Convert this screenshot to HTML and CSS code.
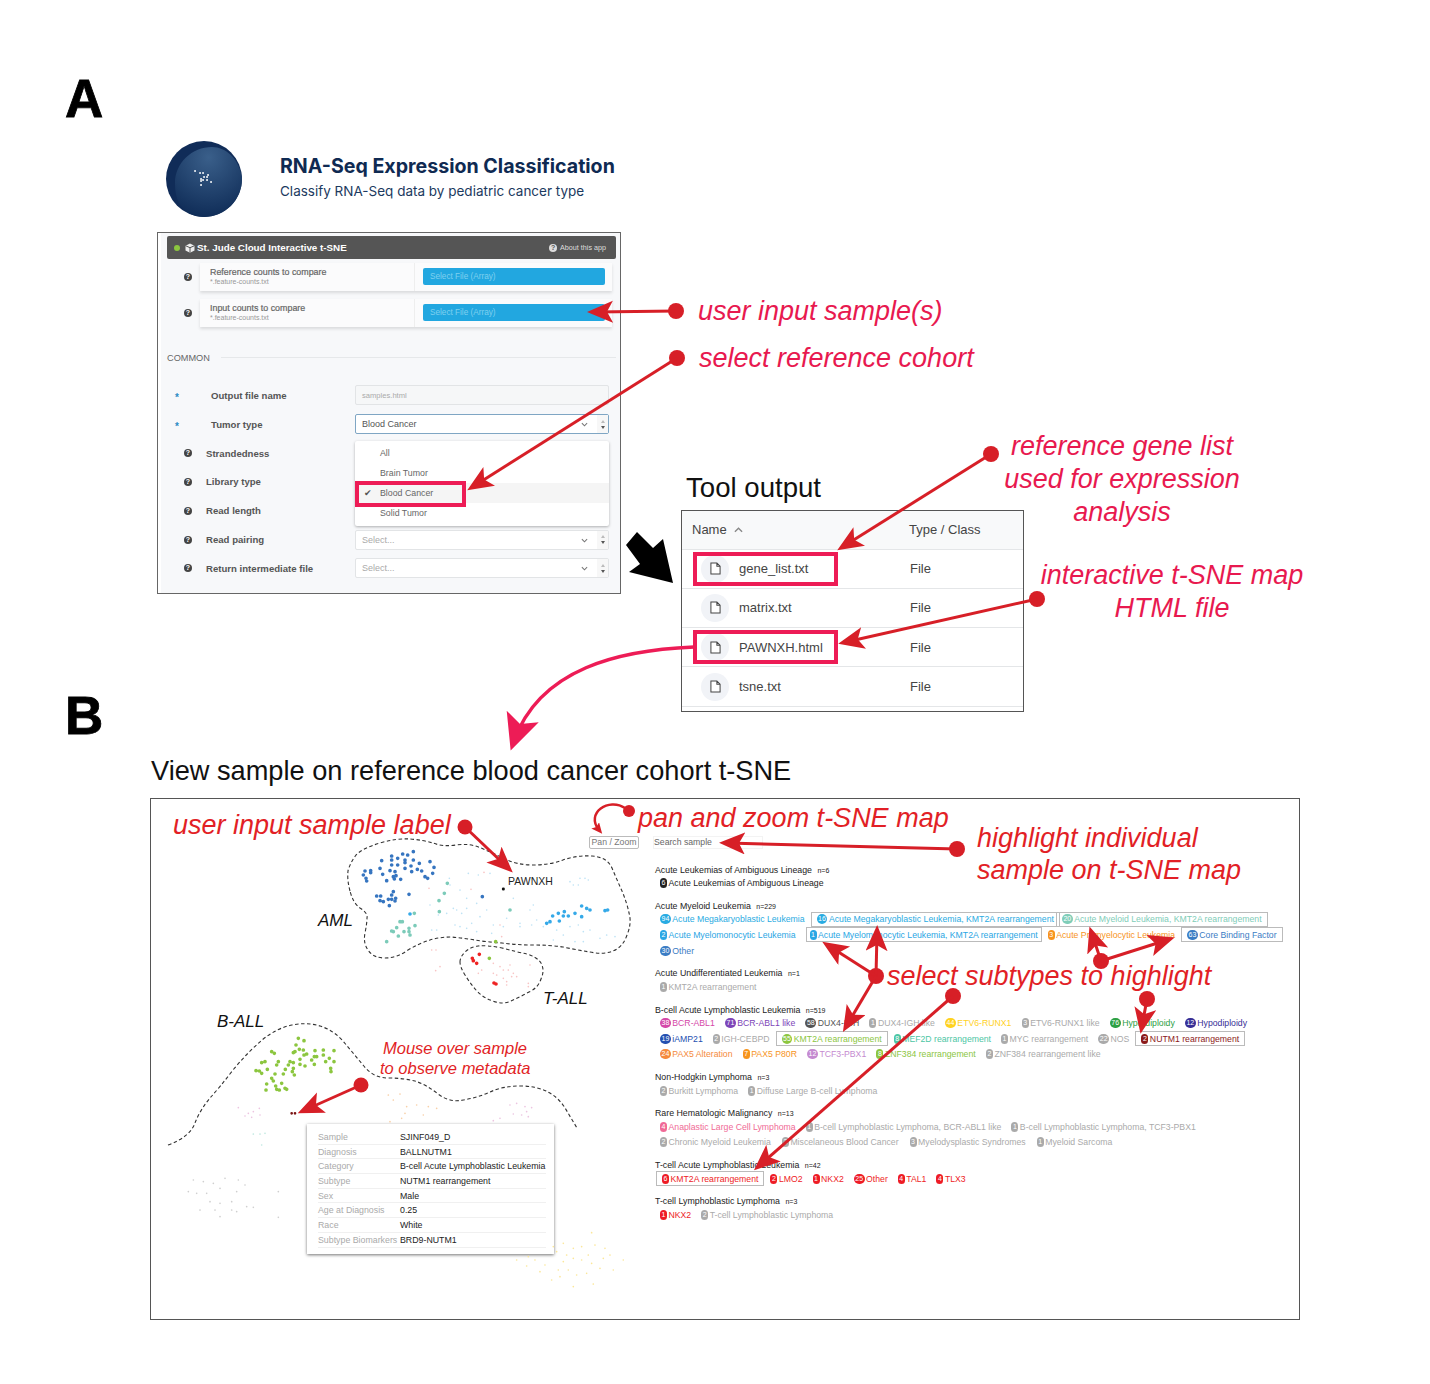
FILE: index.html
```html
<!DOCTYPE html>
<html lang="en">
<head>
<meta charset="utf-8">
<title>RNA-Seq Expression Classification figure</title>
<link rel="stylesheet" href="styles.css">
</head>
<body>
<main class="figure">
  <div class="panel-letter letter-a">A</div>
  <div class="panel-letter letter-b">B</div>

  <header class="app-title">
    <svg class="logo" viewBox="0 0 76 76" width="76" height="76">
      <defs>
        <radialGradient id="lens" cx="50%" cy="15%" r="90%"><stop offset="0" stop-color="#3a5f8a"/><stop offset="1" stop-color="#0d2a55"/></radialGradient>
      </defs>
      <circle cx="38" cy="38" r="38" fill="#102c58"/>
      <path d="M9 42C9 22 26 6 46 6c14 0 27 12 30 30 1 2 0 2 0 2 0 21-17 38-38 38-12 0-20-6-25-14-3-6-4-12-4-20z" fill="url(#lens)"/>
      <path class="logo-dots" d="M29 30h.1M34 32h.1M37 32h.1M42 34h.1M41 36h.1M35 38h.1M37 39h.1M35 40h.1M41 39h.1M45 41h.1M35 44h.1M38 36h.1"/>
    </svg>
    <div class="title-text">
      <h1>RNA-Seq Expression Classification</h1>
      <p>Classify RNA-Seq data by pediatric cancer type</p>
    </div>
  </header>

  <section class="app">
    <div class="app-bar">
      <span class="status"></span>
      <svg class="cube" viewBox="0 0 10 10" width="10" height="10"><path d="M5 .5 9.5 2.700v4.800L5 9.700.5 7.500V2.700z" fill="#eee"/><path d="M5 4.700v5M.5 2.700 5 4.700l4.500-2" stroke="#555" fill="none"/></svg>
      <strong>St. Jude Cloud Interactive t-SNE</strong>
      <span class="about"><i class="help light">?</i>About this app</span>
    </div>
    <div class="input-row">
      <i class="help">?</i>
      <div class="input-card">
        <div class="input-label"><b>Reference counts to compare</b><small>*.feature-counts.txt</small></div>
        <div class="input-action"><span class="file-btn">Select File (Array)</span></div>
      </div>
    </div>
    <div class="input-row">
      <i class="help">?</i>
      <div class="input-card">
        <div class="input-label"><b>Input counts to compare</b><small>*.feature-counts.txt</small></div>
        <div class="input-action"><span class="file-btn">Select File (Array)</span></div>
      </div>
    </div>
    <div class="common"><span>COMMON</span></div>
    <div class="form">
      <div class="form-row"><label class="req">Output file name</label><span class="field muted">samples.html</span></div>
      <div class="form-row tumor"><label class="req">Tumor type</label>
        <span class="field select focus">Blood Cancer<svg class="chev" viewBox="0 0 8 5" width="7" height="5"><path d="M1 1l3 3 3-3"/></svg><span class="spin"><em class="up"></em><em class="down"></em></span></span>
        <ul class="menu">
          <li>All</li>
          <li>Brain Tumor</li>
          <li class="active"><span class="tick">✔</span>Blood Cancer</li>
          <li>Solid Tumor</li>
        </ul>
      </div>
      <div class="form-row"><label><i class="help">?</i>Strandedness</label></div>
      <div class="form-row"><label><i class="help">?</i>Library type</label></div>
      <div class="form-row"><label><i class="help">?</i>Read length</label></div>
      <div class="form-row"><label><i class="help">?</i>Read pairing</label>
        <span class="field select muted">Select...<svg class="chev" viewBox="0 0 8 5" width="7" height="5"><path d="M1 1l3 3 3-3"/></svg><span class="spin"><em class="up"></em><em class="down"></em></span></span></div>
      <div class="form-row"><label><i class="help">?</i>Return intermediate file</label>
        <span class="field select muted">Select...<svg class="chev" viewBox="0 0 8 5" width="7" height="5"><path d="M1 1l3 3 3-3"/></svg><span class="spin"><em class="up"></em><em class="down"></em></span></span></div>
    </div>
  </section>

  <h2 class="tool-title">Tool output</h2>
  <section class="files">
    <div class="file-head"><span class="col-name">Name <svg class="caret" viewBox="0 0 10 6" width="9" height="6"><path d="M1 5l4-4 4 4"/></svg></span><span class="col-type">Type / Class</span></div>
    <div class="file-row"><span class="file-ico"><svg viewBox="0 0 12 14" width="11" height="13"><path d="M1 1h6.500L11 4.500V13H1zM7.500 1v3.500H11"/></svg></span><span class="col-file">gene_list.txt</span><span class="col-type">File</span></div>
    <div class="file-row"><span class="file-ico"><svg viewBox="0 0 12 14" width="11" height="13"><path d="M1 1h6.500L11 4.500V13H1zM7.500 1v3.500H11"/></svg></span><span class="col-file">matrix.txt</span><span class="col-type">File</span></div>
    <div class="file-row"><span class="file-ico"><svg viewBox="0 0 12 14" width="11" height="13"><path d="M1 1h6.500L11 4.500V13H1zM7.500 1v3.500H11"/></svg></span><span class="col-file">PAWNXH.html</span><span class="col-type">File</span></div>
    <div class="file-row"><span class="file-ico"><svg viewBox="0 0 12 14" width="11" height="13"><path d="M1 1h6.500L11 4.500V13H1zM7.500 1v3.500H11"/></svg></span><span class="col-file">tsne.txt</span><span class="col-type">File</span></div>
  </section>

  <h2 class="view-title">View sample on reference blood cancer cohort t-SNE</h2>
  <section class="tsne-box"></section>

  <div class="tsne-tools">
    <span class="pan">Pan / Zoom</span>
    <span class="search">Search sample</span>
  </div>

  <section class="legend">
    <div class="group">
      <h3>Acute Leukemias of Ambiguous Lineage <small>n=6</small></h3>
      <div class="chips"><span class="chip ink"><b>6</b>Acute Leukemias of Ambiguous Lineage</span></div>
    </div>
    <div class="group">
      <h3>Acute Myeloid Leukemia <small>n=229</small></h3>
      <div class="chips">
        <span class="chip sky"><b>94</b>Acute Megakaryoblastic Leukemia</span>
        <span class="chip sky boxed"><b>16</b>Acute Megakaryoblastic Leukemia, KMT2A rearrangement</span>
        <span class="chip teal boxed join"><b>20</b>Acute Myeloid Leukemia, KMT2A rearrangement</span>
      </div>
      <div class="chips">
        <span class="chip sky2"><b>2</b>Acute Myelomonocytic Leukemia</span>
        <span class="chip sky2 boxed wide"><b>1</b>Acute Myelomonocytic Leukemia, KMT2A rearrangement</span>
        <span class="chip orange"><b>3</b>Acute Promyelocytic Leukemia</span>
        <span class="chip steel boxed"><b>63</b>Core Binding Factor</span>
      </div>
      <div class="chips"><span class="chip steel"><b>30</b>Other</span></div>
    </div>
    <div class="group">
      <h3>Acute Undifferentiated Leukemia <small>n=1</small></h3>
      <div class="chips"><span class="chip grey"><b>1</b>KMT2A rearrangement</span></div>
    </div>
    <div class="group">
      <h3>B-cell Acute Lymphoblastic Leukemia <small>n=519</small></h3>
      <div class="chips roomy">
        <span class="chip magenta"><b>38</b>BCR-ABL1</span>
        <span class="chip purple"><b>71</b>BCR-ABL1 like</span>
        <span class="chip dark"><b>58</b>DUX4-IGH</span>
        <span class="chip grey"><b>1</b>DUX4-IGH like</span>
        <span class="chip yellow"><b>44</b>ETV6-RUNX1</span>
        <span class="chip grey"><b>3</b>ETV6-RUNX1 like</span>
        <span class="chip green"><b>76</b>Hyperdiploidy</span>
        <span class="chip indigo"><b>12</b>Hypodiploidy</span>
      </div>
      <div class="chips">
        <span class="chip royal"><b>19</b>iAMP21</span>
        <span class="chip grey"><b>2</b>IGH-CEBPD</span>
        <span class="chip lime boxed"><b>55</b>KMT2A rearrangement</span>
        <span class="chip mint"><b>8</b>MEF2D rearrangement</span>
        <span class="chip grey"><b>1</b>MYC rearrangement</span>
        <span class="chip grey"><b>22</b>NOS</span>
        <span class="chip maroon boxed"><b>2</b>NUTM1 rearrangement</span>
      </div>
      <div class="chips roomy">
        <span class="chip coral"><b>24</b>PAX5 Alteration</span>
        <span class="chip amber"><b>7</b>PAX5 P80R</span>
        <span class="chip orchid"><b>12</b>TCF3-PBX1</span>
        <span class="chip lime"><b>8</b>ZNF384 rearrangement</span>
        <span class="chip grey"><b>2</b>ZNF384 rearrangement like</span>
      </div>
    </div>
    <div class="group">
      <h3>Non-Hodgkin Lymphoma <small>n=3</small></h3>
      <div class="chips">
        <span class="chip grey"><b>2</b>Burkitt Lymphoma</span>
        <span class="chip grey"><b>1</b>Diffuse Large B-cell Lymphoma</span>
      </div>
    </div>
    <div class="group">
      <h3>Rare Hematologic Malignancy <small>n=13</small></h3>
      <div class="chips">
        <span class="chip pink"><b>4</b>Anaplastic Large Cell Lymphoma</span>
        <span class="chip grey"><b>1</b>B-cell Lymphoblastic Lymphoma, BCR-ABL1 like</span>
        <span class="chip grey"><b>1</b>B-cell Lymphoblastic Lymphoma, TCF3-PBX1</span>
      </div>
      <div class="chips loose">
        <span class="chip grey"><b>2</b>Chronic Myeloid Leukemia</span>
        <span class="chip grey"><b>2</b>Miscelaneous Blood Cancer</span>
        <span class="chip grey"><b>3</b>Myelodysplastic Syndromes</span>
        <span class="chip grey"><b>1</b>Myeloid Sarcoma</span>
      </div>
    </div>
    <div class="group">
      <h3>T-cell Acute Lymphoblastic Leukemia <small>n=42</small></h3>
      <div class="chips">
        <span class="chip red boxed"><b>6</b>KMT2A rearrangement</span>
        <span class="chip red"><b>2</b>LMO2</span>
        <span class="chip red"><b>1</b>NKX2</span>
        <span class="chip red"><b>25</b>Other</span>
        <span class="chip red"><b>4</b>TAL1</span>
        <span class="chip red"><b>4</b>TLX3</span>
      </div>
    </div>
    <div class="group">
      <h3>T-cell Lymphoblastic Lymphoma <small>n=3</small></h3>
      <div class="chips">
        <span class="chip red"><b>1</b>NKX2</span>
        <span class="chip grey"><b>2</b>T-cell Lymphoblastic Lymphoma</span>
      </div>
    </div>
  </section>

  <div class="tooltip">
    <dl>
      <div><dt>Sample</dt><dd>SJINF049_D</dd></div>
      <div><dt>Diagnosis</dt><dd>BALLNUTM1</dd></div>
      <div><dt>Category</dt><dd>B-cell Acute Lymphoblastic Leukemia</dd></div>
      <div><dt>Subtype</dt><dd>NUTM1 rearrangement</dd></div>
      <div><dt>Sex</dt><dd>Male</dd></div>
      <div><dt>Age at Diagnosis</dt><dd>0.25</dd></div>
      <div><dt>Race</dt><dd>White</dd></div>
      <div><dt>Subtype Biomarkers</dt><dd>BRD9-NUTM1</dd></div>
    </dl>
  </div>

  <svg class="overlay" viewBox="0 0 1430 1384" width="1430" height="1384">
    <defs>
      <marker id="head" markerUnits="userSpaceOnUse" markerWidth="28" markerHeight="24" refX="18" refY="11" orient="auto"><path d="M26 11 0 0 6 11 0 22z" fill="#d71f27"/></marker>
      <marker id="small" markerUnits="userSpaceOnUse" markerWidth="14" markerHeight="12" refX="6" refY="5" orient="auto"><path d="M11 5 0 0 2 5 0 10z" fill="#d71f27"/></marker>
      <marker id="pinkhead" markerUnits="userSpaceOnUse" markerWidth="38" markerHeight="36" refX="26" refY="17" orient="auto"><path d="M36 17 0 0 8 17 0 34z" fill="#ed1c56"/></marker>
    </defs>

    <!-- t-SNE clusters -->
    <path class="dash" d="M350 891Q347 880 348 871Q350 863 356 855Q363 848 380 843Q397 838 410 839Q423 840 433 843Q443 847 456 845Q470 843 481 848Q493 853 505 859Q517 865 533 865Q550 865 563 860Q577 855 592 856Q607 857 612 868Q617 880 622 891Q627 903 629 913Q632 923 627 935Q623 947 613 951Q603 955 590 952Q577 950 563 947Q550 945 533 945Q517 945 502 943Q487 942 475 940Q463 938 451 937Q440 937 430 940Q420 943 408 950Q397 958 385 958Q373 958 368 950Q363 943 365 933Q367 923 367 918Q368 913 360 908Q353 903 350 891Z"/>
    <path class="dash" d="M460 962Q460 957 465 952Q470 947 478 946Q487 945 502 948Q517 952 527 954Q537 957 541 963Q545 970 541 979Q538 988 529 992Q520 997 511 1001Q503 1005 493 1001Q483 998 476 990Q470 983 465 975Q460 967 460 962Z"/>
    <path class="dash" d="M168 1145Q190 1137 195 1123Q200 1110 210 1098Q220 1087 233 1070Q247 1053 262 1040Q277 1028 292 1025Q307 1022 320 1026Q333 1030 343 1041Q353 1053 363 1065Q373 1078 388 1078Q403 1078 415 1081Q427 1085 438 1094Q450 1103 463 1100Q477 1098 490 1092Q503 1086 520 1086Q537 1086 548 1092Q560 1098 568 1113L577 1128"/>

    <g transform="translate(330 810) scale(.3333)">
      <path class="dots tiny palesky" d="M358 205h.1M360 225h.1M415 190h.1M445 195h.1M480 190h.1M390 240h.1M380 300h.1M350 310h.1M300 285h.1M325 315h.1M370 295h.1M395 310h.1M410 265h.1M410 295h.1M440 280h.1M450 320h.1M470 300h.1M490 345h.1M520 350h.1M550 265h.1M570 340h.1M600 300h.1M610 285h.1M620 330h.1M640 350h.1M680 360h.1M700 375h.1M720 215h.1M730 225h.1M745 225h.1M750 205h.1M765 205h.1M775 210h.1M720 350h.1M745 345h.1M760 365h.1M780 360h.1M810 385h.1M830 375h.1M855 380h.1M735 395h.1M760 395h.1M390 350h.1M410 355h.1M375 345h.1M320 360h.1M305 360h.1M425 340h.1M440 365h.1M485 370h.1M530 325h.1M570 350h.1M605 345h.1M670 390h.1"/>
      <path class="dots tiny palered" d="M297 235h.1M423 238h.1M462 187h.1M510 345h.1M515 380h.1M305 420h.1M318 420h.1M330 470h.1M317 482h.1M455 480h.1M490 460h.1M510 470h.1M520 480h.1M535 480h.1M550 490h.1M500 495h.1M520 505h.1M530 515h.1M545 500h.1M560 500h.1M530 525h.1M595 520h.1M595 530h.1M490 490h.1M600 465h.1M540 465h.1M445 490h.1"/>
      <path class="dots blue" d="M250 125h.1M218 132h.1M233 135h.1M185 138h.1M155 152h.1M185 150h.1M203 145h.1M225 150h.1M250 150h.1M300 155h.1M185 165h.1M203 165h.1M225 158h.1M243 168h.1M268 160h.1M150 175h.1M180 182h.1M195 185h.1M225 175h.1M245 185h.1M262 178h.1M275 183h.1M312 172h.1M105 183h.1M122 182h.1M122 188h.1M100 195h.1M108 205h.1M110 213h.1M158 193h.1M198 197h.1M190 200h.1M170 212h.1M193 207h.1M212 208h.1M285 200h.1M293 205h.1M308 190h.1M140 258h.1M152 258h.1M190 245h.1M185 255h.1M237 253h.1M150 272h.1M160 275h.1M175 268h.1M185 268h.1M197 265h.1M195 273h.1M178 287h.1M457 260h.1"/>
      <path class="dots teal" d="M352 220h.1M343 250h.1M327 272h.1M328 305h.1M253 310h.1M540 300h.1M210 335h.1M217 335h.1M200 353h.1M255 347h.1M190 365h.1M185 363h.1M237 355h.1M237 365h.1M222 365h.1M205 378h.1M240 375h.1M170 395h.1"/>
      <path class="dots sky" d="M240 312h.1M755 288h.1M770 295h.1M780 300h.1M825 302h.1M833 300h.1M703 305h.1M685 310h.1M735 310h.1M755 320h.1M668 318h.1M700 318h.1M715 318h.1M660 335h.1M650 340h.1M688 333h.1"/>
      <path class="dots red" d="M427 445h.1M430 452h.1M448 433h.1M440 460h.1M492 519h.1M498 522h.1"/>
      <path class="dots green" d="M497 395h.1M478 445h.1"/>
      <path class="dots black" d="M520 237h.1"/>
    </g>
    <g transform="translate(160 1010) scale(.3333)">
      <path class="dots green" d="M415 85h.1M432 92h.1M408 105h.1M418 118h.1M430 120h.1M400 128h.1M405 125h.1M440 132h.1M432 135h.1M420 148h.1M465 122h.1M490 120h.1M522 122h.1M463 140h.1M490 135h.1M508 145h.1M455 150h.1M470 140h.1M497 155h.1M522 155h.1M463 163h.1M335 125h.1M343 130h.1M305 158h.1M315 155h.1M355 155h.1M350 165h.1M390 155h.1M400 158h.1M435 168h.1M385 165h.1M400 175h.1M420 163h.1M288 182h.1M298 183h.1M305 190h.1M322 178h.1M376 178h.1M370 192h.1M397 185h.1M403 195h.1M345 192h.1M512 175h.1M513 185h.1M335 205h.1M340 213h.1M320 222h.1M365 220h.1M347 228h.1M375 235h.1M380 238h.1M318 240h.1M350 238h.1M358 240h.1"/>
      <path class="dots maroon" d="M395 310h.1M405 310h.1"/>
      <path class="dots tiny palegrey" d="M100 510h.1M130 515h.1M160 520h.1M195 505h.1M235 510h.1M255 525h.1M85 545h.1M110 550h.1M140 550h.1M180 535h.1M230 545h.1M150 575h.1M180 580h.1M215 575h.1M260 590h.1M280 592h.1M120 600h.1M165 600h.1M215 600h.1M230 605h.1M180 620h.1M355 545h.1M355 622h.1"/>
      <path class="dots tiny palepink" d="M235 293h.1M265 310h.1M280 305h.1M298 295h.1M300 315h.1M255 318h.1M275 322h.1M1050 285h.1M1070 280h.1M1095 290h.1M1115 293h.1M1100 305h.1M1060 312h.1M1085 315h.1M1105 320h.1M1000 332h.1M1020 325h.1"/>
      <path class="dots tiny paleorange" d="M685 255h.1M700 270h.1M720 252h.1M740 290h.1M770 285h.1M805 290h.1M830 295h.1M735 310h.1M725 325h.1M690 335h.1M790 315h.1"/>
      <path class="dots tiny paleteal" d="M280 372h.1M300 372h.1M315 370h.1M305 405h.1"/>
      <path class="dots tiny paleyellow" d="M1105 740h.1M1125 750h.1M1155 765h.1M1180 710h.1M1190 725h.1M1210 700h.1M1240 715h.1M1265 710h.1M1305 705h.1M1335 715h.1M1390 750h.1M1360 780h.1M1320 775h.1M1295 760h.1M1265 750h.1M1240 745h.1M1210 755h.1M1195 780h.1M1225 780h.1M1250 795h.1M1280 790h.1M1140 785h.1M1175 810h.1M1200 800h.1M1240 830h.1M1300 822h.1M1070 750h.1M1100 768h.1M1295 668h.1M1350 735h.1M1330 745h.1M1220 735h.1M1285 735h.1"/>
    </g>

    <!-- annotations: panel A -->
    <circle class="pin" cx="676" cy="311" r="8"/><line class="arrow" x1="676" y1="311" x2="595" y2="312" marker-end="url(#head)"/>
    <circle class="pin" cx="677" cy="358" r="8"/><line class="arrow" x1="677" y1="358" x2="474" y2="486" marker-end="url(#head)"/>
    <circle class="pin" cx="991" cy="454" r="8"/><line class="arrow" x1="991" y1="454" x2="844" y2="546" marker-end="url(#head)"/>
    <circle class="pin" cx="1037" cy="599" r="8"/><line class="arrow" x1="1037" y1="599" x2="846" y2="642" marker-end="url(#head)"/>
    <polygon points="626,545 637,532 653,548 663,539 673,583 629,572 640,564" fill="#000"/>
    <rect class="hl" x="357" y="483" width="107" height="22"/>
    <rect class="hl" x="695" y="554" width="141" height="30"/>
    <rect class="hl" x="695" y="632" width="141" height="30"/>
    <path class="pinkline" d="M694 647C620 650 540 668 514 741" marker-end="url(#pinkhead)"/>

    <!-- annotations: panel B -->
    <circle class="pin" cx="465" cy="827" r="7.500"/><line class="arrow" x1="465" y1="827" x2="507" y2="867" marker-end="url(#head)"/>
    <circle class="pin" cx="629" cy="811" r="6"/><path class="arrow thin" d="M625 808C609 797 585 813 599 830" marker-end="url(#small)"/>
    <circle class="pin" cx="957" cy="849" r="8"/><line class="arrow" x1="957" y1="849" x2="727" y2="843" marker-end="url(#head)"/>
    <circle class="pin" cx="876" cy="976" r="8"/>
    <line class="arrow" x1="876" y1="976" x2="877" y2="933" marker-end="url(#head)"/>
    <line class="arrow" x1="876" y1="976" x2="829" y2="946" marker-end="url(#head)"/>
    <line class="arrow" x1="876" y1="976" x2="847" y2="1025" marker-end="url(#head)"/>
    <circle class="pin" cx="1101" cy="961" r="8"/>
    <line class="arrow" x1="1101" y1="961" x2="1092" y2="934" marker-end="url(#head)"/>
    <line class="arrow" x1="1101" y1="961" x2="1167" y2="940" marker-end="url(#head)"/>
    <circle class="pin" cx="1147" cy="999" r="8"/><line class="arrow" x1="1147" y1="999" x2="1142" y2="1026" marker-end="url(#head)"/>
    <circle class="pin" cx="953" cy="996" r="8"/><line class="arrow" x1="953" y1="996" x2="760" y2="1165" marker-end="url(#head)"/>
    <circle class="pin" cx="361" cy="1085" r="7.500"/><line class="arrow" x1="361" y1="1085" x2="305" y2="1110" marker-end="url(#head)"/>
  </svg>

  <span class="pt-label">PAWNXH</span>
  <span class="note big pink-note n-input">user input sample(s)</span>
  <span class="note big pink-note n-cohort">select reference cohort</span>
  <span class="note big pink-note center n-genes">reference gene list<br>used for expression<br>analysis</span>
  <span class="note big pink-note center n-map">interactive t-SNE map<br>HTML file</span>
  <span class="note big red-note n-label">user input sample label</span>
  <span class="note big red-note n-pan">pan and zoom t-SNE map</span>
  <span class="note big red-note n-high">highlight individual<br>sample on t-SNE map</span>
  <span class="note big red-note n-select">select subtypes to highlight</span>
  <span class="note red-note center n-mouse">Mouse over sample<br>to observe metadata</span>
  <span class="note cluster n-aml">AML</span>
  <span class="note cluster n-tall">T-ALL</span>
  <span class="note cluster n-ball">B-ALL</span>
</main>
</body>
</html>
```

FILE: styles.css
```css
* { box-sizing: border-box; }
html, body { margin: 0; padding: 0; background: #fff; }
body { font-family: "Liberation Sans", Arial, sans-serif; color: #222; }
.figure { position: relative; width: 1430px; height: 1384px; overflow: hidden; }

.panel-letter { position: absolute; font-weight: 700; font-size: 53px; line-height: 53px; color: #000; -webkit-text-stroke: .8px #000; }
.letter-a { left: 65px; top: 72px; }
.letter-b { left: 65px; top: 689px; }

.app-title { position: absolute; left: 166px; top: 141px; display: flex; align-items: center; gap: 38px; }
.logo { display: block; }
.logo-dots { fill: none; stroke: #fff; stroke-width: 1.800; stroke-linecap: round; }
.title-text { padding-bottom: 5px; }
.title-text h1 { margin: 0 0 2px; font: 700 19.600px/26px Inter, sans-serif; color: #0f2a52; }
.title-text p { margin: 0; font: 400 13.500px/20px Inter, sans-serif; color: #1c3a60; }

.app {
  position: absolute; left: 157px; top: 232px; width: 464px; height: 362px;
  border: 1px solid #666; padding: 3px 4px 0 9px;
  background: linear-gradient(90deg, #fff 3px, #f7f8fa 3px);
  font-size: 9px; color: #555;
}
.app-bar { height: 23px; background: #555; border-radius: 2px; display: flex; align-items: center; padding: 0 10px 0 7px; color: #fff; }
.status { width: 6px; height: 6px; border-radius: 50%; background: #8cc63f; margin-right: 5px; }
.cube { margin-right: 2px; }
.app-bar strong { font-size: 9.800px; }
.about { margin-left: auto; font-size: 7.200px; color: #ddd; display: flex; align-items: center; gap: 3px; }

.help { display: inline-flex; align-items: center; justify-content: center; width: 8px; height: 8px; border-radius: 50%; background: #444; color: #fff; font: 700 7px/8px "Liberation Sans", sans-serif; flex: none; }
.help.light { background: #ddd; color: #555; }

.input-row { display: flex; align-items: center; margin-top: 4px; margin-right: 4px; padding-left: 17px; gap: 8px; }
.input-row + .input-row { margin-top: 8px; }
.input-card { flex: 1; height: 28px; display: flex; background: #fbfbfc; box-shadow: 0 2px 3px rgba(0,0,0,.12); }
.input-label { width: 215px; padding: 4px 10px; display: flex; flex-direction: column; border-right: 1px solid #eee; }
.input-label b { font-weight: 400; font-size: 8.900px; line-height: 10px; color: #666; -webkit-text-stroke: .2px #666; }
.input-label small { font-size: 7px; line-height: 9px; color: #999; }
.input-action { flex: 1; padding: 5px 7px 6px 8px; }
.file-btn { display: block; height: 17px; background: #22a7e0; border-radius: 2px; color: #7fd0ef; font-size: 8.200px; line-height: 17px; padding-left: 7px; }

.common { margin-top: 24px; height: 13px; display: flex; align-items: center; gap: 11px; font-size: 9.200px; color: #666; }
.common::after { content: ""; flex: 1; height: 1px; background: #e6e8ea; }

.form { margin-top: 17px; margin-right: 7px; }
.form-row { height: 28.850px; display: flex; align-items: center; justify-content: space-between; position: relative; }
.form-row label { display: flex; align-items: center; gap: 14px; padding-left: 17px; font-size: 9.600px; font-weight: 700; color: #555; }
.form-row label.req { padding-left: 44px; position: relative; }
.form-row label.req::before { content: "*"; position: absolute; left: 8px; top: 2px; color: #2b8cc4; font-size: 10px; }
.field { width: 254px; height: 20px; background: #fff; border: 1px solid #e2e4e6; border-radius: 2px; padding-left: 6px; display: flex; align-items: center; position: relative; font-size: 9px; color: #555; }
.field.muted { color: #aaa; }
.field.muted:not(.select) { background: #f6f7f8; font-size: 7.600px; }
.field.focus { border-color: #7fa6c4; }
.chev { position: absolute; right: 20px; top: 7px; fill: none; stroke: #777; stroke-width: 1.200; }
.spin { position: absolute; right: 0; top: 0; bottom: 0; width: 11px; background: #f7f7f7; display: flex; flex-direction: column; align-items: center; justify-content: center; gap: 3px; }
.spin em { width: 0; height: 0; border-left: 2.500px solid transparent; border-right: 2.500px solid transparent; }
.spin .up { border-bottom: 3px solid #bbb; }
.spin .down { border-top: 3px solid #555; }

.menu { position: absolute; left: 188px; top: 31px; width: 254px; height: 85px; margin: 0; padding: 2px 0 0; list-style: none; background: #fff; border-radius: 2px; box-shadow: 0 1px 3px rgba(0,0,0,.3); font-size: 8.800px; color: #666; z-index: 2; }
.menu li { height: 20px; line-height: 20px; padding-left: 25px; position: relative; }
.menu li.active { background: #f5f5f5; }
.tick { position: absolute; left: 9px; font-size: 9px; color: #555; }

.tool-title { position: absolute; left: 686px; top: 472px; margin: 0; font-weight: 400; font-size: 27.600px; line-height: 32px; color: #111; }
.files { position: absolute; left: 681px; top: 510px; width: 343px; height: 202px; border: 1px solid #555; font-size: 13px; color: #444; }
.file-head { height: 38.500px; background: #f8f9fa; display: flex; align-items: center; padding-left: 10px; border-bottom: 1px solid #e4e6e8; }
.col-name { width: 217px; display: flex; align-items: center; gap: 7px; }
.caret { fill: none; stroke: #888; stroke-width: 1.500; }
.file-row { height: 39.300px; display: flex; align-items: center; padding-left: 19px; border-bottom: 1px solid #e4e6e8; }
.file-ico { width: 28px; height: 28px; border-radius: 50%; background: #f1f3f7; display: flex; align-items: center; justify-content: center; margin-right: 10px; }
.file-ico svg { fill: #fff; stroke: #444; stroke-width: 1.100; }
.col-file { width: 171px; }

.view-title { position: absolute; left: 151px; top: 754px; margin: 0; font-weight: 400; font-size: 27.200px; line-height: 34px; color: #111; }
.tsne-box { position: absolute; left: 150px; top: 798px; width: 1150px; height: 522px; border: 1px solid #555; }

.tsne-tools { position: absolute; left: 589px; top: 836px; display: flex; gap: 14px; font-size: 8.700px; }
.pan { height: 13px; width: 50px; border: 1px solid #bbb; border-radius: 2px; color: #777; line-height: 11px; text-align: center; }
.search { height: 13px; width: 110px; border: 1px solid #f3f3f3; color: #666; line-height: 11px; }

.legend { position: absolute; left: 655px; top: 864.700px; width: 640px; }
.group { margin-bottom: 10px; }
.group h3 { margin: 0; height: 10.500px; font-weight: 400; font-size: 8.800px; line-height: 10.500px; color: #222; white-space: nowrap; }
.group h3 small { font-size: 7px; line-height: 7px; margin-left: 3px; }
.chips { display: flex; align-items: center; height: 15.700px; padding-left: 5px; white-space: nowrap; gap: 10px; }
.chips.roomy { gap: 10.200px; }
.chips.loose { gap: 11px; }
.chip { --c: #aaa; display: inline-flex; align-items: center; color: var(--c); font-size: 8.700px; line-height: 12px; }
.chip b { background: var(--c); color: #fff; font-weight: 400; font-size: 7px; line-height: 10px; height: 10px; min-width: 7px; padding: 0 1.500px; border-radius: 5px; margin-right: 1.500px; text-align: center; }
.chip.boxed { border: 1px solid #bbb; height: 15px; padding: 0 5px; margin: 0 -4px; }
.chip.boxed.join { margin-left: -10px; }
.chip.boxed.wide { margin-left: 0; padding: 0 3px; }
.ink { --c: #222; } .sky { --c: #29abe2; } .sky2 { --c: #2aa6e4; } .teal { --c: #7fcdb8; } .orange { --c: #f7941d; } .steel { --c: #3b7cc4; }
.grey { --c: #aaa; } .magenta { --c: #d548a8; } .purple { --c: #7d45b8; } .dark { --c: #555; } .yellow { --c: #ffd21f; } .green { --c: #2da044; }
.indigo { --c: #372f96; } .royal { --c: #2450b0; } .lime { --c: #8cc63f; } .mint { --c: #4cc6a4; } .maroon { --c: #8b1a1a; } .coral { --c: #f58a3c; }
.amber { --c: #f7941d; } .orchid { --c: #c58ad0; } .pink { --c: #f06a96; } .red { --c: #ee1c25; }

.tooltip { position: absolute; left: 307px; top: 1124px; width: 247px; height: 130px; background: #fff; box-shadow: 0 1px 3px rgba(0,0,0,.55); padding: 6px 8px 0 11px; font-size: 8.800px; }
.tooltip dl { margin: 0; }
.tooltip dl div { height: 14.700px; display: flex; align-items: center; border-bottom: 1px solid #f0f0f0; }
.tooltip dt { width: 82px; color: #aaa; white-space: nowrap; }
.tooltip dd { margin: 0; color: #222; white-space: nowrap; }

.overlay { position: absolute; left: 0; top: 0; z-index: 5; pointer-events: none; }
.dash { fill: none; stroke: #333; stroke-width: 1.100; stroke-dasharray: 3.500 2.500; }
.dots { fill: none; stroke-width: 11; stroke-linecap: round; }
.dots.tiny { stroke-width: 5; }
.dots.blue { stroke: #3675c0; } .dots.teal { stroke: #7ccbb9; } .dots.sky { stroke: #35a9e8; } .dots.red { stroke: #ee2222; }
.dots.green { stroke: #8cc63f; } .dots.black { stroke: #111; stroke-width: 9; } .dots.maroon { stroke: #7a1414; stroke-width: 8; }
.palesky { stroke: #bfe3f5; } .palered { stroke: #f8c4c4; } .palegrey { stroke: #cfcfcf; } .palepink { stroke: #ecc4e0; }
.paleorange { stroke: #f8d0a8; } .paleteal { stroke: #bfe8e0; } .paleyellow { stroke: #fbe79a; }
.pin { fill: #d71f27; }
.arrow { fill: none; stroke: #d71f27; stroke-width: 3; }
.arrow.thin { stroke-width: 2.500; }
.hl { fill: none; stroke: #ed1c56; stroke-width: 4; }
.pinkline { fill: none; stroke: #ed1c56; stroke-width: 3.500; }

.pt-label { position: absolute; left: 508px; top: 875px; font-size: 10.500px; line-height: 12px; color: #222; z-index: 6; }
.note { position: absolute; font-style: italic; white-space: nowrap; z-index: 6; }
.big { font-size: 27px; line-height: 33px; }
.center { text-align: center; }
.pink-note { color: #e8194f; }
.red-note { color: #e21f26; }
.n-input { left: 698px; top: 295px; }
.n-cohort { left: 699px; top: 342px; }
.n-genes { left: 1004px; top: 430px; width: 236px; }
.n-map { left: 1040px; top: 559px; width: 264px; }
.n-label { left: 173px; top: 809px; }
.n-pan { left: 638px; top: 802px; }
.n-high { left: 977px; top: 822px; line-height: 32px; }
.n-select { left: 887px; top: 960px; }
.n-mouse { left: 380px; top: 1039px; width: 150px; font-size: 16.500px; line-height: 19.500px; }
.cluster { color: #111; font-size: 17px; line-height: 20px; }
.n-aml { left: 318px; top: 911px; }
.n-tall { left: 543px; top: 989px; }
.n-ball { left: 217px; top: 1012px; }
```
